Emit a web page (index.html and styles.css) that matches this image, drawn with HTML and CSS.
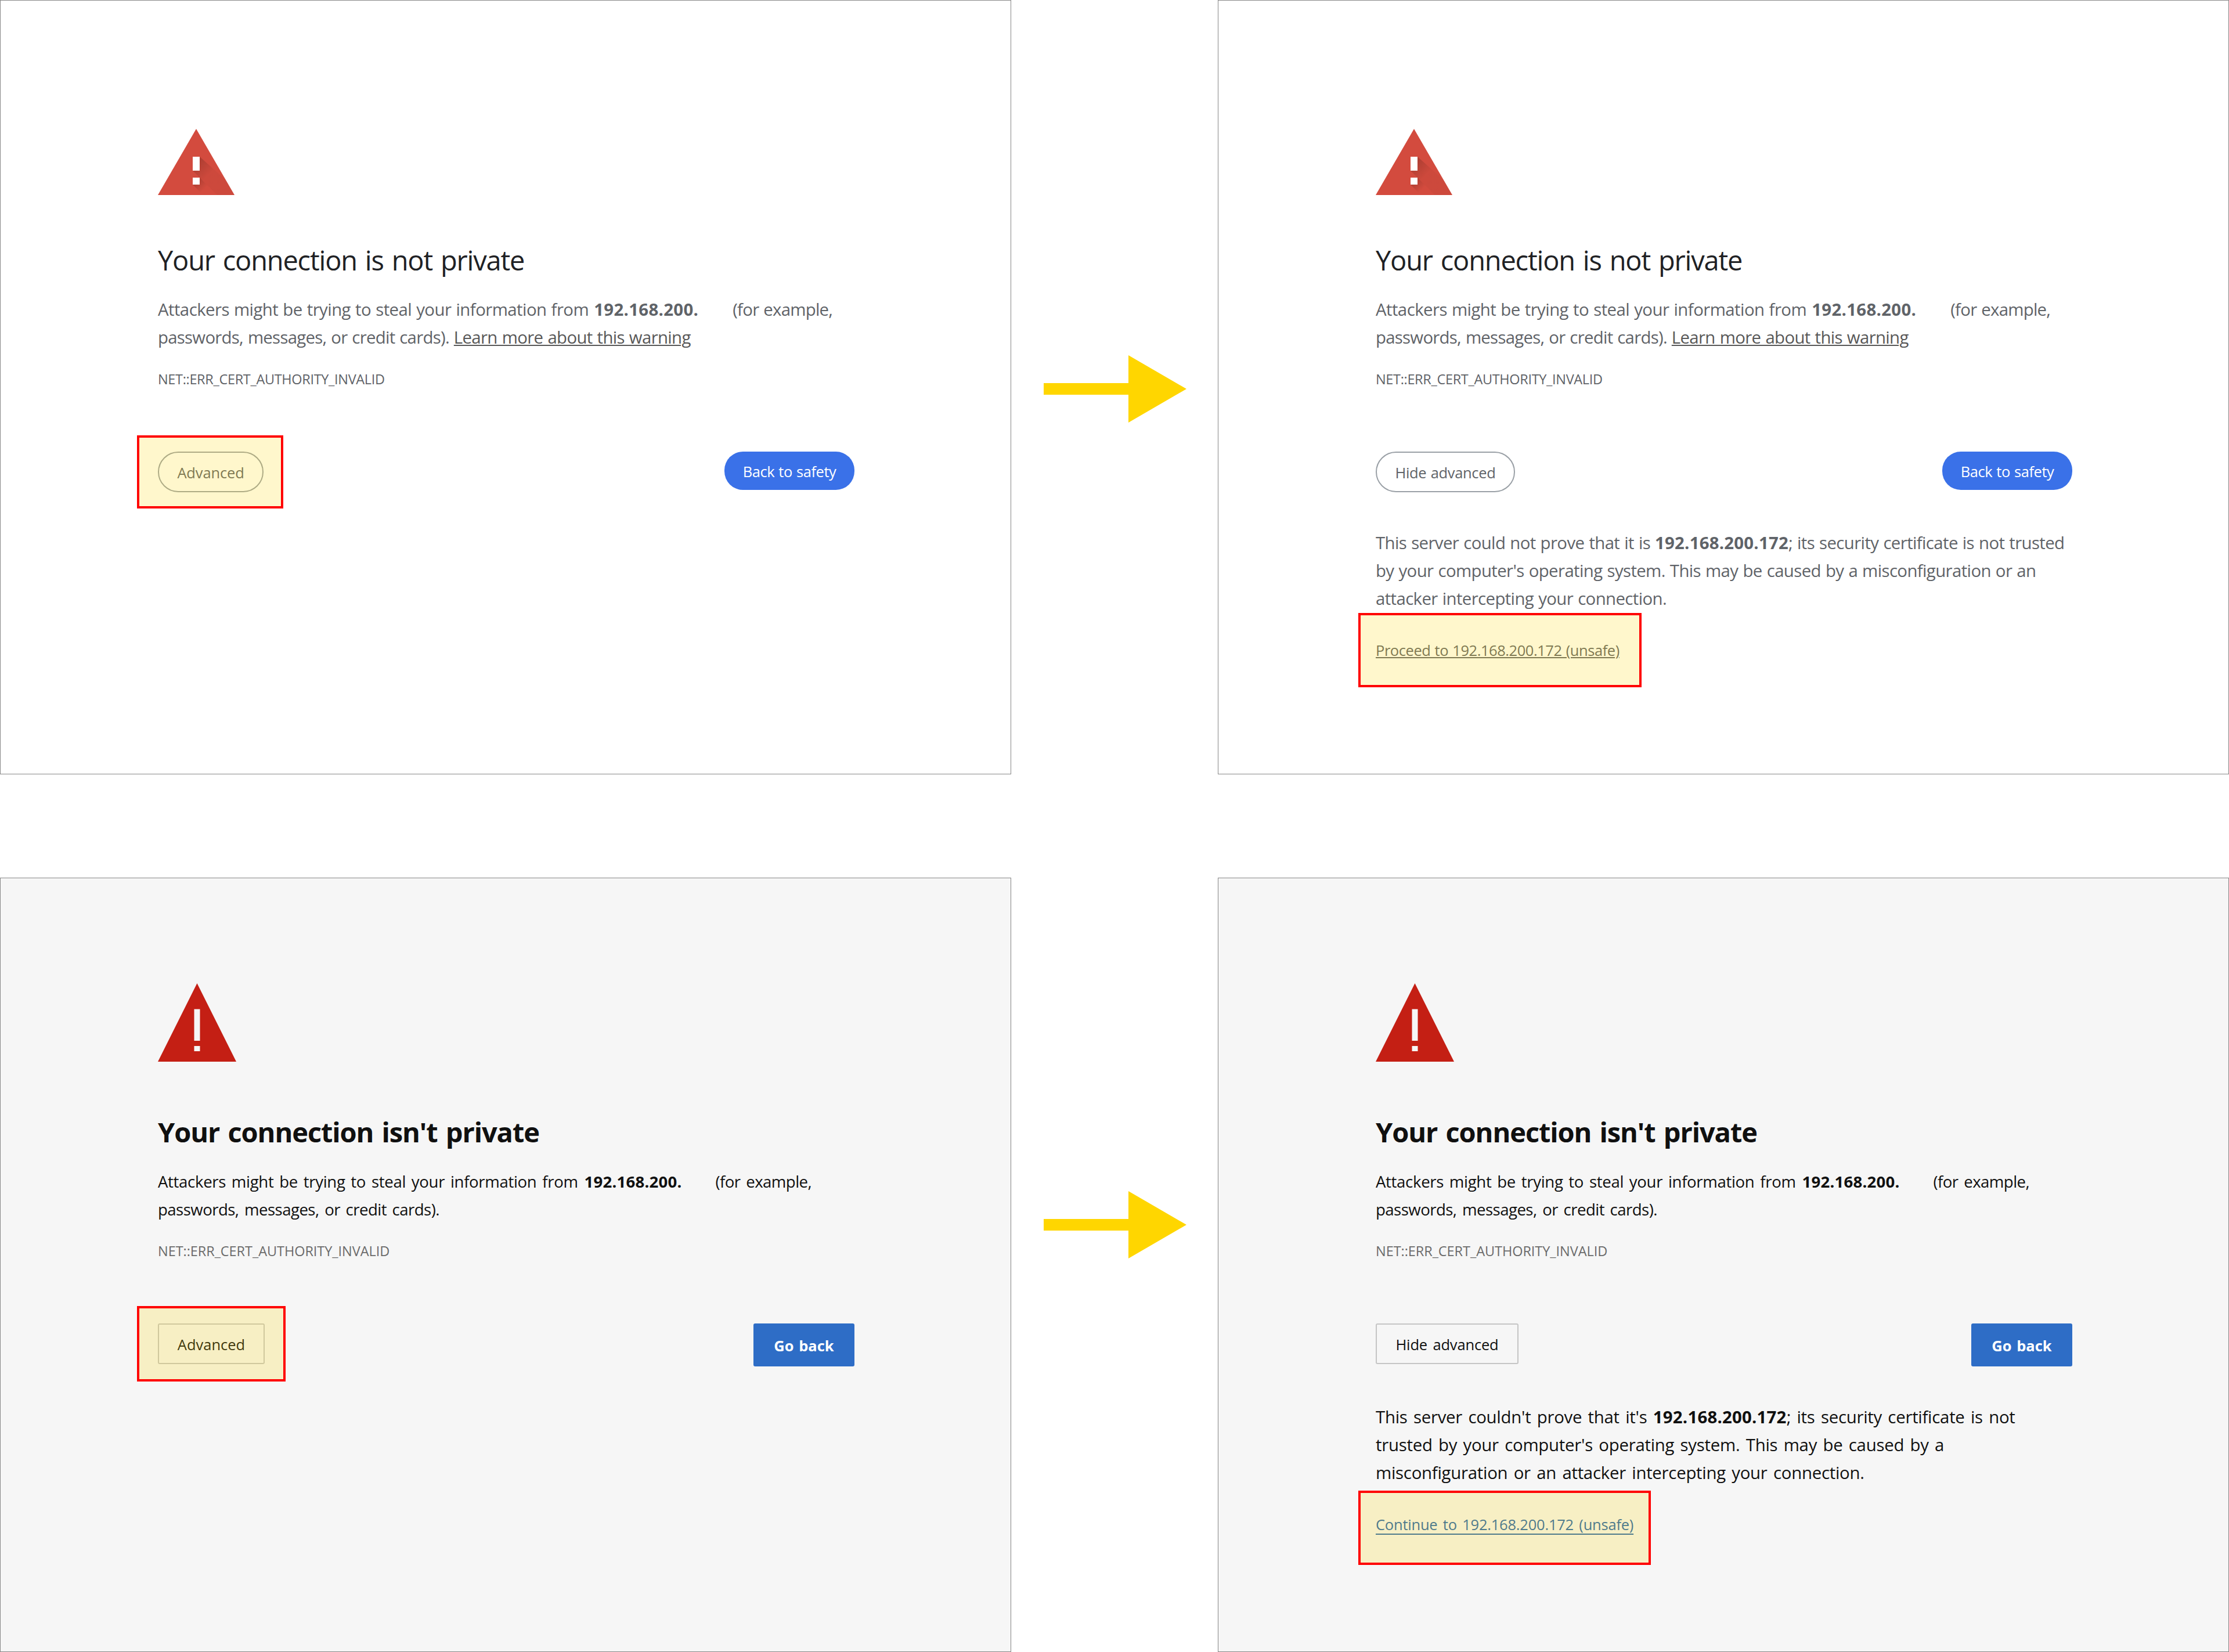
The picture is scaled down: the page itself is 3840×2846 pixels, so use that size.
FILE: index.html
```
<!DOCTYPE html>
<html lang="en">

<head>
    <meta charset="UTF-8">
    <meta name="viewport" content="width=device-width, initial-scale=1.0">
    <title>Your connection is not private</title>
    <link rel="stylesheet" href="styles.css">
</head>

<body>
    <!-- shared shapes -->
    <svg class="defs" width="0" height="0">
        <defs>
            <linearGradient id="shade" gradientUnits="userSpaceOnUse" x1="66" y1="60" x2="86" y2="80">
                <stop offset="0" stop-color="#7a2d22" stop-opacity="0.4" />
                <stop offset="1" stop-color="#7a2d22" stop-opacity="0.07" />
            </linearGradient>
            <linearGradient id="shade-dot" gradientUnits="userSpaceOnUse" x1="66" y1="90" x2="80" y2="104">
                <stop offset="0" stop-color="#7a2d22" stop-opacity="0.4" />
                <stop offset="1" stop-color="#7a2d22" stop-opacity="0" />
            </linearGradient>
            <symbol id="chrome-warning" viewBox="0 0 132 114">
                <path d="M66 0L132 114H0Z" fill="#d34b3e" />
                <path d="M72 48L117 88L132 114H102L60 72Z" fill="url(#shade)" />
                <path d="M72 84L102 114H78L60 96Z" fill="url(#shade-dot)" />
                <path d="M60 48H72V72H60ZM60 84H72V96H60Z" fill="#fff" />
            </symbol>
            <symbol id="edge-warning" viewBox="0 0 136 136">
                <path d="M67.5 0L135 135H0Z" fill="#c41f14" />
                <path d="M62.5 44.5H72.5V99H62.5ZM62.5 108H72.5V117H62.5Z" fill="#f6f6f6" />
            </symbol>
            <symbol id="arrow" viewBox="0 0 246 116">
                <path d="M0 48H146V0L246 58L146 116V68H0Z" fill="#ffd600" />
            </symbol>
        </defs>
    </svg>

    <div class="steps chrome">
        <section class="panel">
            <svg class="icon"><use href="#chrome-warning" /></svg>
            <h1>Your connection is not private</h1>
            <p class="message">
                Attackers might be trying to steal your information from <b class="host">192.168.200.</b><span class="masked"></span><span class="tail">(for example,</span><br>
                <span class="second">passwords, messages, or credit cards). </span><a class="learn">Learn more about this warning</a>
            </p>
            <div class="code">NET::ERR_CERT_AUTHORITY_INVALID</div>
            <div class="buttons">
                <div class="marked">
                    <button class="secondary">Advanced</button>
                </div>
                <button class="primary">Back to safety</button>
            </div>
        </section>

        <svg class="arrow"><use href="#arrow" /></svg>

        <section class="panel">
            <svg class="icon"><use href="#chrome-warning" /></svg>
            <h1>Your connection is not private</h1>
            <p class="message">
                Attackers might be trying to steal your information from <b class="host">192.168.200.</b><span class="masked"></span><span class="tail">(for example,</span><br>
                <span class="second">passwords, messages, or credit cards). </span><a class="learn">Learn more about this warning</a>
            </p>
            <div class="code">NET::ERR_CERT_AUTHORITY_INVALID</div>
            <div class="buttons">
                <button class="secondary wide">Hide advanced</button>
                <button class="primary">Back to safety</button>
            </div>
            <p class="details">
                This server could not prove that it is <b>192.168.200.172</b>; its security certificate is not trusted<br>
                by your computer's operating system. This may be caused by a misconfiguration or an<br>
                attacker intercepting your connection.
            </p>
            <div class="marked proceed">
                <a>Proceed to 192.168.200.172 (unsafe)</a>
            </div>
        </section>
    </div>

    <div class="steps edge">
        <section class="panel">
            <svg class="icon"><use href="#edge-warning" /></svg>
            <h1>Your connection isn't private</h1>
            <p class="message">
                Attackers might be trying to steal your information from <b class="host">192.168.200.</b><span class="masked"></span><span class="tail">(for example,</span><br>
                <span class="second">passwords, messages, or credit cards).</span>
            </p>
            <div class="code">NET::ERR_CERT_AUTHORITY_INVALID</div>
            <div class="buttons">
                <div class="marked">
                    <button class="secondary">Advanced</button>
                </div>
                <button class="primary">Go back</button>
            </div>
        </section>

        <svg class="arrow"><use href="#arrow" /></svg>

        <section class="panel">
            <svg class="icon"><use href="#edge-warning" /></svg>
            <h1>Your connection isn't private</h1>
            <p class="message">
                Attackers might be trying to steal your information from <b class="host">192.168.200.</b><span class="masked"></span><span class="tail">(for example,</span><br>
                <span class="second">passwords, messages, or credit cards).</span>
            </p>
            <div class="code">NET::ERR_CERT_AUTHORITY_INVALID</div>
            <div class="buttons">
                <button class="secondary wide">Hide advanced</button>
                <button class="primary">Go back</button>
            </div>
            <p class="details">
                This server couldn't prove that it's <b>192.168.200.172</b>; its security certificate is not<br>
                trusted by your computer's operating system. This may be caused by a<br>
                misconfiguration or an attacker intercepting your connection.
            </p>
            <div class="marked proceed">
                <a>Continue to 192.168.200.172 (unsafe)</a>
            </div>
        </section>
    </div>
</body>

</html>
```
FILE: styles.css
```
* {
    box-sizing: border-box;
}

body {
    margin: 0;
    background-color: #ffffff;
    font-family: "Open Sans", "Noto Sans", sans-serif;
    width: 3840px;
    height: 2846px;
    display: flex;
    flex-direction: column;
    gap: 178px;
    overflow: hidden;
}

.defs {
    position: absolute;
}

.steps {
    display: flex;
    height: 1334px;
}

.panel {
    width: 1742px;
    height: 1334px;
    border: 1px solid #868686;
    padding: 221px 269px 0 271px;
    white-space: nowrap;
}

.arrow {
    width: 246px;
    height: 116px;
    margin: 612px 54px 0 56px;
}

.icon {
    display: block;
    width: 132px;
    height: 114px;
}

h1 {
    margin: 82px 0 0;
    font-size: 47px;
    font-weight: 400;
    line-height: 60px;
    letter-spacing: -1.2px;
    word-spacing: 3px;
    color: #202124;
}

p {
    margin: 0;
    font-size: 29.4px;
    line-height: 48px;
}

.message {
    margin-top: 31px;
    letter-spacing: -0.56px;
}

.host {
    margin-left: 1px;
    letter-spacing: 0.3px;
}

/* last octet of the address is left out */
.masked {
    display: inline-block;
    width: 59px;
}

.tail {
    letter-spacing: -0.76px;
}

.second {
    letter-spacing: -0.74px;
}

.learn {
    letter-spacing: -0.66px;
}

a {
    text-decoration: underline;
    text-decoration-thickness: 2px;
    text-underline-offset: 2px;
}

.code {
    margin-top: 31px;
    font-size: 23.5px;
    line-height: 34px;
    letter-spacing: -0.33px;
}

.buttons {
    display: flex;
    justify-content: space-between;
    align-items: flex-start;
    width: 1200px;
    margin-top: 108px;
}

button {
    display: block;
    font-family: inherit;
    font-size: 25.5px;
    line-height: 36px;
    padding: 2px 0 0;
    text-align: center;
}

.primary {
    border: none;
    color: white;
}

.secondary {
    width: 182px;
    height: 70px;
    background: transparent;
    border: 2px solid;
}

.details {
    margin-top: 63px;
    letter-spacing: -0.62px;
}

.details b {
    letter-spacing: 0.2px;
}

.proceed {
    margin-top: 47px;
    font-size: 25.5px;
    line-height: 36px;
}

/* red frame with a yellow tint drawn over the item to click */
.marked {
    position: relative;
}

.marked::after {
    content: "";
    position: absolute;
    inset: -28px -34px -28px -36px;
    border: 4px solid #ff0000;
    background-color: rgba(255, 214, 0, 0.2);
    background-clip: padding-box;
}

/* Chrome */
.chrome .panel {
    color: #5f6368;
    word-spacing: 1px;
}

.chrome .learn {
    color: #585858;
}

.chrome .primary {
    width: 224px;
    height: 66px;
    border-radius: 32px;
    background-color: #3a71e8;
    letter-spacing: -0.45px;
    word-spacing: 1px;
}

.chrome .secondary {
    border-color: #9aa0a6;
    border-radius: 35px;
    color: #5f6368;
    letter-spacing: -0.15px;
}

.chrome .wide {
    width: 240px;
    letter-spacing: -0.32px;
    word-spacing: 1px;
}

.chrome .proceed {
    width: 420px;
    letter-spacing: -0.45px;
}

.chrome .proceed::after {
    inset: -46px -38px -46px -30px;
}

/* Edge */
.edge .panel {
    background-color: #f6f6f6;
    color: #101010;
    padding-top: 181px;
    word-spacing: 3px;
}

.edge .arrow {
    margin-top: 540px;
}

.edge .icon {
    width: 136px;
    height: 136px;
}

.edge h1 {
    margin-top: 90px;
    font-weight: 700;
    letter-spacing: -1.08px;
    color: #101010;
}

.edge .message {
    font-size: 27.6px;
    letter-spacing: -0.34px;
}

.edge .host {
    letter-spacing: 0.2px;
}

.edge .masked {
    width: 58px;
}

.edge .tail,
.edge .second {
    letter-spacing: -0.55px;
}

.edge .code {
    letter-spacing: -0.06px;
    color: #6b6b6b;
}

.edge .primary {
    width: 174px;
    height: 74px;
    border-radius: 3px;
    background-color: #2e6dc6;
    font-weight: 700;
    word-spacing: 2px;
}

.edge .secondary {
    width: 184px;
    border-color: #c5c5c5;
    border-radius: 3px;
    color: #101010;
}

.edge .wide {
    width: 246px;
    letter-spacing: -0.17px;
    word-spacing: 3px;
}

.edge .marked::after {
    inset: -30px -36px;
}

.edge .details {
    letter-spacing: -0.27px;
}

.edge .proceed {
    width: 444px;
    color: #2465b0;
    letter-spacing: -0.22px;
}

.edge .proceed a {
    text-underline-offset: 6px;
    text-decoration-skip-ink: none;
}

.edge .marked.proceed::after {
    inset: -40px -30px -52px;
}
```
